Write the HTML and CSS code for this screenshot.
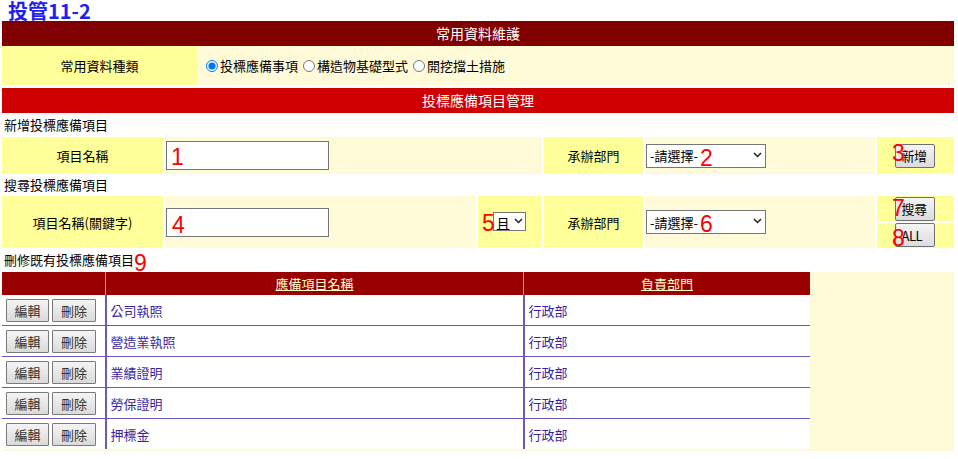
FILE: index.html
```html
<!DOCTYPE html>
<html lang="zh-Hant">
<head>
<meta charset="utf-8">
<title>投管11-2</title>
<link rel="stylesheet" href="styles.css">
</head>
<body>
<div class="page">
  <h1 class="title">投管11-2</h1>

  <div class="bar bar-dark">常用資料維護</div>
  <div class="type-row">
    <div class="type-label">常用資料種類</div>
    <div class="radios">
      <label class="radio"><input type="radio" name="kind" checked>投標應備事項</label>
      <label class="radio"><input type="radio" name="kind">構造物基礎型式</label>
      <label class="radio"><input type="radio" name="kind">開挖擋土措施</label>
    </div>
  </div>

  <div class="bar bar-red">投標應備項目管理</div>

  <div class="section-title">新增投標應備項目</div>
  <div class="form-row form-add">
    <div class="cell-lab">項目名稱</div>
    <div class="cell-val"><input class="text-input" type="text"></div>
    <div class="cell-lab">承辦部門</div>
    <div class="cell-val">
      <div class="select-wrap select-dept">
        <select class="select"><option>-請選擇-</option></select>
        <svg class="chev" width="9" height="6" viewBox="0 0 9 6"><path d="M1 1 L4.5 4.5 L8 1" fill="none" stroke="#222" stroke-width="1.5"/></svg>
      </div>
    </div>
    <div class="cell-lab"><button class="btn">新增</button></div>
  </div>

  <div class="section-title section-title-short">搜尋投標應備項目</div>
  <div class="form-row form-search">
    <div class="cell-lab">項目名稱(關鍵字)</div>
    <div class="cell-val"><input class="text-input" type="text"></div>
    <div class="cell-lab cell-op">
      <div class="select-wrap select-op">
        <select class="select"><option>且</option></select>
        <svg class="chev" width="9" height="6" viewBox="0 0 9 6"><path d="M1 1 L4.5 4.5 L8 1" fill="none" stroke="#222" stroke-width="1.5"/></svg>
      </div>
    </div>
    <div class="cell-lab">承辦部門</div>
    <div class="cell-val">
      <div class="select-wrap select-dept">
        <select class="select"><option>-請選擇-</option></select>
        <svg class="chev" width="9" height="6" viewBox="0 0 9 6"><path d="M1 1 L4.5 4.5 L8 1" fill="none" stroke="#222" stroke-width="1.5"/></svg>
      </div>
    </div>
    <div class="btn-stack">
      <div class="cell-lab btn-sub"><button class="btn">搜尋</button></div>
      <div class="cell-lab btn-sub"><button class="btn">ALL</button></div>
    </div>
  </div>

  <div class="section-title">刪修既有投標應備項目</div>
  <div class="list-wrap">
    <table class="list">
      <thead>
        <tr>
          <th class="col-act"></th>
          <th class="col-name"><a href="#">應備項目名稱</a></th>
          <th class="col-dept"><a href="#">負責部門</a></th>
        </tr>
      </thead>
      <tbody>
        <tr><td class="act"><button class="btn-sm">編輯</button><button class="btn-sm">刪除</button></td><td>公司執照</td><td>行政部</td></tr>
        <tr><td class="act"><button class="btn-sm">編輯</button><button class="btn-sm">刪除</button></td><td>營造業執照</td><td>行政部</td></tr>
        <tr><td class="act"><button class="btn-sm">編輯</button><button class="btn-sm">刪除</button></td><td>業績證明</td><td>行政部</td></tr>
        <tr><td class="act"><button class="btn-sm">編輯</button><button class="btn-sm">刪除</button></td><td>勞保證明</td><td>行政部</td></tr>
        <tr><td class="act"><button class="btn-sm">編輯</button><button class="btn-sm">刪除</button></td><td>押標金</td><td>行政部</td></tr>
      </tbody>
    </table>
  </div>

  <span class="mark m1">1</span>
  <span class="mark m2">2</span>
  <span class="mark m3">3</span>
  <span class="mark m4">4</span>
  <span class="mark m5">5</span>
  <span class="mark m6">6</span>
  <span class="mark m7">7</span>
  <span class="mark m8">8</span>
  <span class="mark m9">9</span>
</div>
</body>
</html>
```

FILE: styles.css
```css
html, body {
  margin: 0;
  padding: 0;
  background: #ffffff;
}

body {
  font-family: "Noto Sans CJK TC", "Liberation Sans", sans-serif;
  font-size: 13px;
  color: #000;
}

.page {
  position: relative;
  width: 952px;
  margin-left: 2px;
}

.title {
  margin: 0;
  height: 21px;
  line-height: 20px;
  padding: 1px 0 0 6px;
  box-sizing: border-box;
  font-size: 20px;
  font-weight: bold;
  color: #1f1fef;
  overflow: visible;
}

.bar {
  height: 25px;
  line-height: 25px;
  text-align: center;
  color: #ffffff;
  font-size: 14px;
}

.bar-dark {
  background: #800000;
}

.bar-red {
  background: #cf0000;
  margin-top: 3px;
}

.type-row {
  display: flex;
  height: 39px;
  background: #fffad7;
}

.type-label {
  width: 195px;
  background: #ffff99;
  display: flex;
  align-items: center;
  justify-content: center;
}

.radios {
  display: flex;
  align-items: center;
  padding-left: 4px;
}

.radio {
  display: flex;
  align-items: center;
}

.radio input {
  margin: 0 2px 0 5px;
  width: 12px;
  height: 12px;
}

.section-title {
  height: 24px;
  line-height: 24px;
  padding-left: 2px;
}

.section-title-short {
  height: 22px;
  line-height: 22px;
}

.form-row {
  display: grid;
  column-gap: 2px;
}

.form-add {
  grid-template-columns: 161px 377px 99px 230px 77px;
  height: 37px;
}

.form-search {
  grid-template-columns: 161px 311px 64px 99px 230px 77px;
  height: 52px;
}

.cell-lab {
  background: #ffff99;
  display: flex;
  align-items: center;
  justify-content: center;
}

.cell-val {
  background: #fffad7;
  display: flex;
  align-items: center;
  padding-left: 1px;
}

.cell-op {
  justify-content: flex-start;
  padding-left: 15px;
}

.text-input {
  box-sizing: border-box;
  width: 163px;
  height: 29px;
  margin: 0;
  border: 1px solid #767676;
  background: #fff;
  padding: 0 3px;
  font: inherit;
}

.select-wrap {
  position: relative;
  display: inline-block;
}

.select {
  appearance: none;
  -webkit-appearance: none;
  box-sizing: border-box;
  margin: 0;
  border: 1px solid #767676;
  border-radius: 0;
  background: #ffffff;
  font-family: "Noto Sans CJK TC", "Liberation Sans", sans-serif;
  font-size: 13px;
  color: #000;
  padding: 0 0 0 3px;
}

.select-dept .select {
  width: 120px;
  height: 24px;
}

.select-op .select {
  width: 33px;
  height: 19px;
  padding-left: 2px;
  font-size: 14px;
}

.chev {
  position: absolute;
  top: 50%;
  margin-top: -4px;
  right: 4px;
  pointer-events: none;
}

.select-op .chev {
  right: 3px;
}

.btn {
  box-sizing: border-box;
  width: 40px;
  height: 24px;
  margin: 0 0 0 -2px;
  padding: 0 0 0 6px;
  border: 1px solid #707070;
  border-radius: 2px;
  background: linear-gradient(#f4f4f4, #dcdcdc);
  font-family: "Noto Sans CJK TC", "Liberation Sans", sans-serif;
  font-size: 13px;
  color: #000;
  text-align: left;
  letter-spacing: -0.5px;
}

.btn-stack {
  display: flex;
  flex-direction: column;
  gap: 1px;
}

.btn-sub {
  flex: 1;
}

.list-wrap {
  display: flex;
  background: #fffad7;
  padding-bottom: 2px;
}

.list {
  width: 808px;
  border-collapse: collapse;
  background: #ffffff;
}

.list th {
  height: 23px;
  padding: 0;
  background: #990000;
  font-weight: normal;
  text-align: center;
}

.list th + th {
  border-left: 1px solid #c9917a;
}

.list th a {
  color: #ffffcc;
  text-decoration: underline;
}

.col-act {
  width: 103px;
}

.col-name {
  width: 417px;
}

.list td {
  height: 30px;
  padding: 0 0 0 4px;
  color: #3a1f9e;
  text-align: left;
  vertical-align: middle;
}

.list td + td {
  border-left: 2px solid #6f58b6;
}

.list tbody tr + tr td {
  border-top: 1px solid #6f58b6;
}

.list td.act {
  padding-left: 4px;
}

.btn-sm {
  box-sizing: border-box;
  height: 23px;
  width: 43px;
  margin: 0 3px 0 0;
  padding: 0;
  border: 1px solid #7a7a7a;
  border-radius: 1px;
  background: linear-gradient(#f4f4f4, #dadada);
  font-family: "Noto Sans CJK TC", "Liberation Sans", sans-serif;
  font-size: 13px;
  color: #333;
  vertical-align: middle;
}

.btn-sm + .btn-sm {
  width: 44px;
}

.mark {
  position: absolute;
  font-family: "Liberation Sans", Arial, sans-serif;
  font-size: 23px;
  line-height: 22px;
  color: #ff0000;
}

.m1 { left: 169px; top: 146px; }
.m2 { left: 698px; top: 147px; }
.m3 { left: 890px; top: 142px; }
.m4 { left: 170px; top: 214px; }
.m5 { left: 480px; top: 212px; }
.m6 { left: 698px; top: 213px; }
.m7 { left: 890px; top: 197px; }
.m8 { left: 890px; top: 227px; }
.m9 { left: 132px; top: 252px; }
```
